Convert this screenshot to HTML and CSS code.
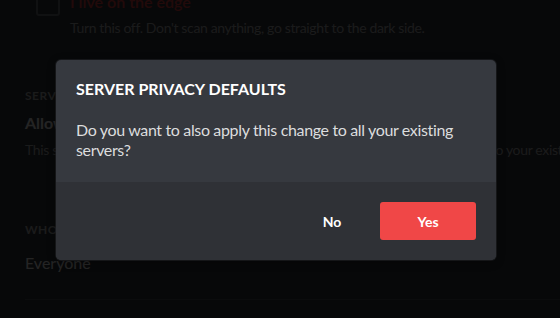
FILE: index.html
```html
<!DOCTYPE html>
<html>
<head>
<meta charset="utf-8">
<link rel="stylesheet" href="styles.css">
</head>
<body>
<div class="page">
  <div class="radio-row">
    <div class="checkbox"></div>
    <div class="radio-text">
      <div class="radio-title">I live on the edge</div>
      <div class="radio-desc">Turn this off. Don't scan anything, go straight to the dark side.</div>
    </div>
  </div>
  <div class="section privacy">
    <h5 class="section-head">Server Privacy Defaults</h5>
    <div class="setting-title">Allow direct messages from server members.</div>
    <div class="setting-desc">This setting is applied when you join a new server. It does not apply retroactively to your existing servers.</div>
  </div>
  <div class="section friends">
    <h5 class="section-head">Who can add you as a friend</h5>
    <div class="setting-title">Everyone</div>
    <div class="divider"></div>
  </div>
</div>
<div class="overlay">
  <div class="modal">
    <div class="modal-body">
      <h4 class="modal-title">Server Privacy Defaults</h4>
      <p class="modal-text">Do you want to also apply this change to all your existing servers?</p>
    </div>
    <div class="modal-footer">
      <button class="btn btn-link">No</button>
      <button class="btn btn-red">Yes</button>
    </div>
  </div>
</div>
</body>
</html>
```

FILE: styles.css
```css
* { box-sizing: border-box; }
html, body {
  margin: 0;
  padding: 0;
  width: 560px;
  height: 318px;
  overflow: hidden;
}
body {
  background: #36393f;
  font-family: Lato, "Noto Sans", sans-serif;
  position: relative;
}
.page {
  padding: 0 0 0 25px;
  white-space: nowrap;
  overflow: hidden;
  width: 560px;
}
.radio-row {
  display: flex;
  gap: 10px;
  margin-top: -8px;
  margin-left: 11px;
}
.checkbox {
  width: 24px;
  height: 24px;
  border: 2px solid #72767d;
  border-radius: 3px;
  flex: none;
}
.radio-title {
  color: #f04747;
  font-size: 16px;
  line-height: 20px;
  font-weight: 600;
}
.radio-desc {
  color: #b9bbbe;
  font-size: 14px;
  line-height: 18px;
  margin-top: 7px;
  letter-spacing: -0.35px;
}
.section-head {
  margin: 0;
  color: #b9bbbe;
  font-size: 12px;
  line-height: 16px;
  font-weight: 700;
  text-transform: uppercase;
  letter-spacing: 0.5px;
}
.privacy { margin-top: 51px; }
.friends { margin-top: 63px; }
.setting-title {
  color: #fff;
  font-size: 16px;
  line-height: 20px;
  font-weight: 700;
  margin-top: 9px;
}
.setting-desc {
  color: #b9bbbe;
  font-size: 14px;
  line-height: 18px;
  margin-top: 8px;
  letter-spacing: -0.35px;
}
.friends .setting-title { margin-top: 15px; font-weight: 400; }
.divider {
  height: 1px;
  background: #4f545c;
  margin-top: 26px;
}
.overlay {
  position: absolute;
  inset: 0;
  background: rgba(0, 0, 0, 0.86);
  padding: 60px 0 0 56px;
}
.modal {
  width: 440px;
  border-radius: 5px;
  overflow: hidden;
  background: #36393f;
  box-shadow: 0 0 0 1px rgba(32,34,37,.6), 0 2px 10px 0 rgba(0,0,0,.3);
}
.modal-body {
  padding: 19px 20px 22px 20px;
}
.modal-title {
  margin: 0;
  color: #fff;
  font-size: 16px;
  line-height: 20px;
  font-weight: 700;
  text-transform: uppercase;
  letter-spacing: 0;
}
.modal-text {
  margin: 21px 0 0 0;
  color: #dcddde;
  font-size: 16px;
  line-height: 20px;
  letter-spacing: -0.35px;
}
.modal-footer {
  background: #2f3136;
  padding: 20px;
  display: flex;
  justify-content: flex-end;
}
.btn {
  font-family: inherit;
  width: 96px;
  height: 38px;
  border: 0;
  border-radius: 3px;
  font-size: 14px;
  font-weight: 700;
  color: #fff;
  cursor: pointer;
}
.btn-link { background: transparent; }
.btn-red { background: #f04747; }
```
